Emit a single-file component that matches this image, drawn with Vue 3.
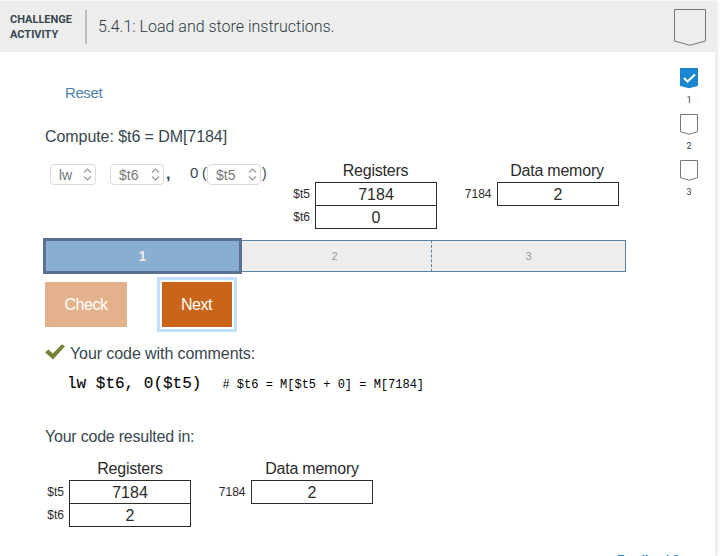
<script setup>
const before = [
  { title: 'Registers', rows: [['$t5', '7184'], ['$t6', '0']] },
  { title: 'Data memory', rows: [['7184', '2']] },
]
const after = [
  { title: 'Registers', rows: [['$t5', '7184'], ['$t6', '2']] },
  { title: 'Data memory', rows: [['7184', '2']] },
]
const steps = [
  { n: 1, done: true },
  { n: 2, done: false },
  { n: 3, done: false },
]
</script>

<template>
  <div class="page">
    <header class="header">
      <div class="kind">CHALLENGE<br />ACTIVITY</div>
      <h1 class="title"><span>5.4.1: Load and store instructions.</span></h1>
      <svg class="badge" width="33" height="38" viewBox="0 0 33 38">
        <path d="M.5 .5H31.5V32L16 36.3L.5 32Z" fill="none" stroke="#777" />
      </svg>
    </header>

    <div class="body">
      <main class="content">
        <a class="reset"><span>Reset</span></a>
        <p class="prompt"><span>Compute: $t6 = DM[7184]</span></p>

        <section class="work">
          <div class="code-entry">
            <span class="select s-op">lw<svg width="9" height="13" viewBox="0 0 9 13"><path d="M1 4.5L4.5 1L8 4.5M1 8.5L4.5 12L8 8.5" /></svg></span>
            <span class="select s-dst">$t6<svg width="9" height="13" viewBox="0 0 9 13"><path d="M1 4.5L4.5 1L8 4.5M1 8.5L4.5 12L8 8.5" /></svg></span>
            <span class="comma">,</span>
            <span class="offset">0</span>
            <span class="paren">(</span>
            <span class="select s-src">$t5<svg width="9" height="13" viewBox="0 0 9 13"><path d="M1 4.5L4.5 1L8 4.5M1 8.5L4.5 12L8 8.5" /></svg></span>
            <span class="paren close">)</span>
          </div>
          <div class="tables">
            <div v-for="t in before" :key="t.title" class="table">
              <div class="caption">{{ t.title }}</div>
              <div v-for="r in t.rows" :key="r[0]" class="row">
                <span class="label">{{ r[0] }}</span><span class="cell">{{ r[1] }}</span>
              </div>
            </div>
          </div>
        </section>

        <div class="progress">
          <div class="seg active">1</div>
          <div class="seg second">2</div>
          <div class="seg third">3</div>
        </div>

        <div class="buttons">
          <button class="btn check">Check</button>
          <button class="btn next">Next</button>
        </div>

        <p class="feedback">
          <svg width="20" height="16" viewBox="0 0 20 16"><path d="M0 8.2L3.6 5.6L7.8 9.6L17 .3L20 2.2L8 15.6Z" fill="#6f8435" /></svg>
          <span>Your code with comments:</span>
        </p>
        <pre class="code"><span class="instr">lw $t6, 0($t5)</span><span class="remark"># $t6 = M[$t5 + 0] = M[7184]</span></pre>

        <p class="result"><span>Your code resulted in:</span></p>
        <div class="tables result-tables">
          <div v-for="t in after" :key="t.title" class="table">
            <div class="caption">{{ t.title }}</div>
            <div v-for="r in t.rows" :key="r[0]" class="row">
              <span class="label">{{ r[0] }}</span><span class="cell">{{ r[1] }}</span>
            </div>
          </div>
        </div>
        <a class="feedback-link">Feedback?</a>
      </main>

      <aside class="steps">
        <div v-for="s in steps" :key="s.n" class="step">
          <svg width="18" height="21" viewBox="0 0 18 21">
            <template v-if="s.done">
              <path d="M0 0H18V18L9 20.2L0 18Z" fill="#1a86d0" />
              <path d="M4 10L7.5 13.5L15 6.5" fill="none" stroke="#fff" stroke-width="2" />
            </template>
            <path v-else d="M.5 .5H17.5V17.7L9 20.2L.5 17.7Z" fill="none" stroke="#777" />
          </svg>
          <span>{{ s.n }}</span>
        </div>
      </aside>
    </div>
  </div>
</template>

<style>
body {
  background: #fff;
  overflow: hidden;
}
</style>

<style scoped>
.page {
  box-sizing: border-box;
  width: 717px;
  height: 556px;
  overflow: hidden;
  border-top: 1px solid #f8f8f8;
  border-right: 2px solid #ededed;
  box-shadow: 1px 0 3px #eee;
  font-family: "Liberation Sans", Arial, sans-serif;
  font-size: 16px;
  color: #37474f;
}
p, h1, pre { margin: 0; }
.header {
  display: flex;
  box-sizing: border-box;
  height: 51px;
  margin-right: -1px;
  padding-left: 10px;
  background: #ededed;
  font-family: Roboto, sans-serif;
}
.kind {
  box-sizing: border-box;
  width: 77px;
  height: 34px;
  margin-top: 9px;
  padding-top: 2px;
  border-right: 2px solid #bdbdbd;
  font-size: 11px;
  line-height: 15px;
  font-weight: 700;
}
.title {
  flex: 1;
  padding-left: 11px;
  font-size: 16px;
  line-height: 51px;
  font-weight: 300;
  color: #2b3a42;
}
.badge { margin: 8px 9px 0 0; }
.body { display: flex; }
.content {
  display: flex;
  flex-direction: column;
  box-sizing: border-box;
  flex: none;
  width: 680px;
  padding: 30px 0 0 45px;
}
.reset {
  margin-left: 20px;
  line-height: 22px;
  font-size: 15px;
  letter-spacing: -.4px;
  color: #4f7fa8;
}
.prompt {
  margin-top: 22px;
  line-height: 22px;
  letter-spacing: -.07px;
}
.work {
  display: flex;
  height: 78px;
  padding-top: 12px;
}
.code-entry {
  display: flex;
  align-items: flex-start;
  width: 240px;
  padding: 4px 0 0 5px;
  box-sizing: border-box;
  line-height: 20px;
}
.select {
  display: flex;
  align-items: center;
  justify-content: space-between;
  box-sizing: border-box;
  height: 21px;
  padding: 0 3px 0 8px;
  border: 1px solid #dcdcdc;
  border-radius: 4px;
  font-size: 14px;
  line-height: 18px;
  color: #777;
}
.select path { fill: none; stroke: #999; stroke-width: 1.2; }
.s-op { width: 46px; }
.s-dst { width: 54px; margin-left: 14px; }
.s-src { width: 54px; }
.comma { width: 25px; padding-left: 2px; box-sizing: border-box; font-weight: 700; }
.offset { width: 13px; padding-left: 1px; box-sizing: border-box; line-height: 18px; font-size: 15px; }
.paren { width: 5px; line-height: 19px; font-size: 14px; }
.close { padding-left: 1px; }
.tables {
  display: flex;
  gap: 18px;
  color: #2b2b2b;
}
.caption {
  height: 22px;
  line-height: 22px;
  margin-left: 30px;
  width: 121px;
  text-align: center;
  letter-spacing: -.22px;
}
.table + .table .caption { margin-left: 42px; width: 120px; }
.result-tables .caption,
.result-tables .table + .table .caption { width: 122px; }
.row {
  display: flex;
  height: 24px;
}
.row + .row { margin-top: -1px; }
.label {
  box-sizing: border-box;
  width: 30px;
  padding-right: 5px;
  text-align: right;
  font-size: 12px;
  line-height: 24px;
}
.table + .table .label { width: 42px; padding-right: 5.5px; }
.cell {
  box-sizing: border-box;
  width: 122px;
  border: 1px solid #2b2b2b;
  text-align: center;
  line-height: 24px;
}
.progress {
  display: flex;
  align-items: center;
  height: 35px;
  margin: 0 54px 0 -2px;
  font-size: 11px;
  color: #999;
}
.seg {
  box-sizing: border-box;
  flex: none;
  height: 32px;
  border: 1px solid #5582a8;
  border-left: 0;
  background: #ededed;
  text-align: center;
  line-height: 31px;
}
.active {
  width: 199px;
  height: 36px;
  border: 3px solid #5a7193;
  background: #88aed0;
  color: #ededed;
  font-size: 14px;
  font-weight: 700;
}
.second { width: 190px; padding-right: 4px; border-right: 1px dashed #5582a8; }
.third { width: 194px; }
.buttons {
  display: flex;
  gap: 35px;
  margin-top: 9px;
}
.btn {
  height: 45px;
  padding: 0;
  border: 0;
  font-family: inherit;
  font-size: 16px;
  letter-spacing: -.5px;
  color: #fff;
}
.check { width: 82px; background: #e4b18d; }
.next {
  width: 70px;
  padding-right: 1px;
  background: #c96519;
  border-radius: 0;
  box-shadow: 0 0 0 2px #fff, 0 0 0 5px #bfe0ff;
}
.feedback {
  display: flex;
  align-items: center;
  gap: 5px;
  height: 22px;
  margin-top: 16px;
  letter-spacing: -.08px;
}
.feedback svg { margin-bottom: 4px; }
.code {
  display: flex;
  gap: 21px;
  margin: 9px 0 0 22px;
  height: 22px;
  line-height: 22px;
  font-family: "Liberation Mono", monospace;
  color: #000;
}
.instr { font-size: 16px; line-height: 21px; -webkit-text-stroke: .1px #000; }
.remark { font-size: 12px; }
.result {
  height: 22px;
  margin-top: 30px;
  line-height: 22px;
  letter-spacing: -.22px;
}
.result-tables { margin: 10px 0 0 -6px; }
.feedback-link {
  margin: 23px 0 0 572px;
  font-size: 12px;
  line-height: 20px;
  font-weight: 700;
  color: #1a86d0;
}
.steps {
  display: flex;
  flex-direction: column;
  gap: 6px;
  padding-top: 16px;
}
.step {
  display: flex;
  flex-direction: column;
  align-items: center;
  width: 18px;
  height: 40px;
  font-family: Roboto, sans-serif;
  font-size: 9px;
  line-height: 12px;
}
.step svg { margin-bottom: 5px; }
</style>
